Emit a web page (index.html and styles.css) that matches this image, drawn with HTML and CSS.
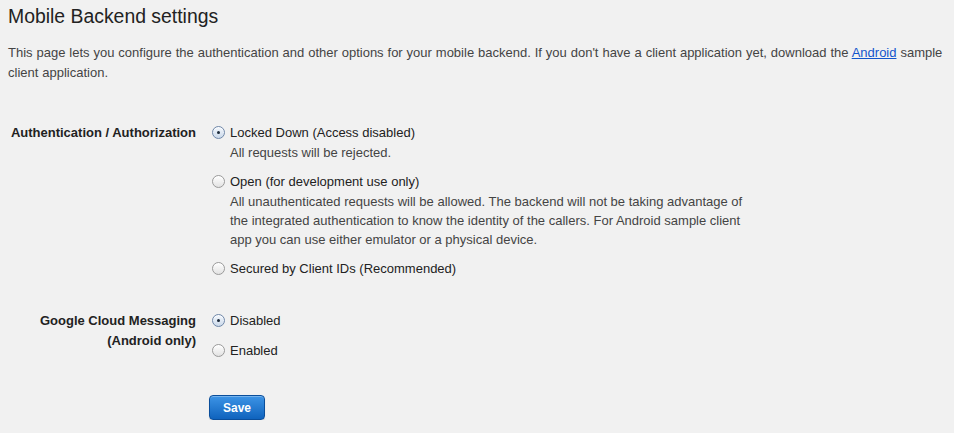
FILE: index.html
```html
<!DOCTYPE html>
<html>
<head>
<meta charset="utf-8">
<link rel="stylesheet" href="styles.css">
</head>
<body>
<div class="page">
  <h1 class="title">Mobile Backend settings</h1>
  <p class="intro">This page lets you configure the authentication and other options for your mobile backend. If you don't have a client application yet, download the <a href="#" class="link">Android</a> sample client application.</p>

  <div class="form">
    <div class="row row-auth">
      <div class="label">Authentication / Authorization</div>
      <div class="options">
        <div class="option">
          <span class="radio checked"></span>
          <div class="opt-body">
            <div class="opt-title">Locked Down (Access disabled)</div>
            <div class="opt-desc">All requests will be rejected.</div>
          </div>
        </div>
        <div class="option">
          <span class="radio"></span>
          <div class="opt-body">
            <div class="opt-title">Open (for development use only)</div>
            <div class="opt-desc">All unauthenticated requests will be allowed. The backend will not be taking advantage of the integrated authentication to know the identity of the callers. For Android sample client app you can use either emulator or a physical device.</div>
          </div>
        </div>
        <div class="option">
          <span class="radio"></span>
          <div class="opt-body">
            <div class="opt-title">Secured by Client IDs (Recommended)</div>
          </div>
        </div>
      </div>
    </div>

    <div class="row row-gcm">
      <div class="label">Google Cloud Messaging<br>(Android only)</div>
      <div class="options">
        <div class="option">
          <span class="radio checked"></span>
          <div class="opt-body"><div class="opt-title">Disabled</div></div>
        </div>
        <div class="option">
          <span class="radio"></span>
          <div class="opt-body"><div class="opt-title">Enabled</div></div>
        </div>
      </div>
    </div>

    <div class="row row-actions">
      <div class="label"></div>
      <div class="actions"><button class="save">Save</button></div>
    </div>
  </div>
</div>
</body>
</html>
```

FILE: styles.css
```css
html, body {
  margin: 0;
  padding: 0;
  background: #f1f1f1;
}
body {
  font-family: "Liberation Sans", Arial, sans-serif;
  color: #333;
  font-size: 13px;
}
.page {
  padding: 0 8px;
}
.title {
  margin: 0;
  padding-top: 4px;
  font-size: 19.4px;
  font-weight: normal;
  color: #222;
  line-height: 24px;
}
.intro {
  margin: 15px 0 0 0;
  line-height: 20px;
  color: #444;
  word-spacing: 0.3px;
}
.link {
  color: #1155cc;
  text-decoration: underline;
}
.form {
  margin-top: 40px;
}
.row {
  display: flex;
  gap: 15px;
}
.row-gcm {
  margin-top: 32px;
}
.row-actions {
  margin-top: 34px;
}
.label {
  width: 188px;
  flex: none;
  text-align: right;
  font-weight: bold;
  color: #222;
  line-height: 20px;
}
.options {
  display: flex;
  flex-direction: column;
  gap: 10px;
}
.option {
  display: flex;
  gap: 5px;
}
.radio {
  flex: none;
  width: 11px;
  height: 11px;
  margin-top: 3px;
  margin-left: 1px;
  border-radius: 50%;
  border: 1px solid #9a9a9a;
  background: linear-gradient(#ffffff, #e2e2e2);
  box-shadow: inset 0 1px 1px rgba(255,255,255,0.8);
  position: relative;
}
.radio.checked {
  border-color: #6f87a8;
  background: linear-gradient(#f4f8fd, #cbd9ea);
}
.radio.checked::after {
  content: "";
  position: absolute;
  left: 4px;
  top: 4px;
  width: 3px;
  height: 3px;
  border-radius: 50%;
  background: #1c2a3a;
}
.opt-title {
  line-height: 20px;
  color: #222;
}
.opt-desc {
  width: 528px;
  line-height: 19px;
  color: #444;
}
.actions {
  margin-left: -2px;
}
.save {
  width: 56px;
  height: 25px;
  border: 1px solid #0a4e9b;
  border-radius: 4px;
  background: linear-gradient(#3d94e6, #0f63bd);
  color: #fff;
  font-family: "Liberation Sans", Arial, sans-serif;
  font-weight: bold;
  font-size: 12px;
  padding: 0;
  box-shadow: inset 0 1px 0 rgba(255,255,255,0.3), 0 1px 1px rgba(0,0,0,0.15);
}
```
